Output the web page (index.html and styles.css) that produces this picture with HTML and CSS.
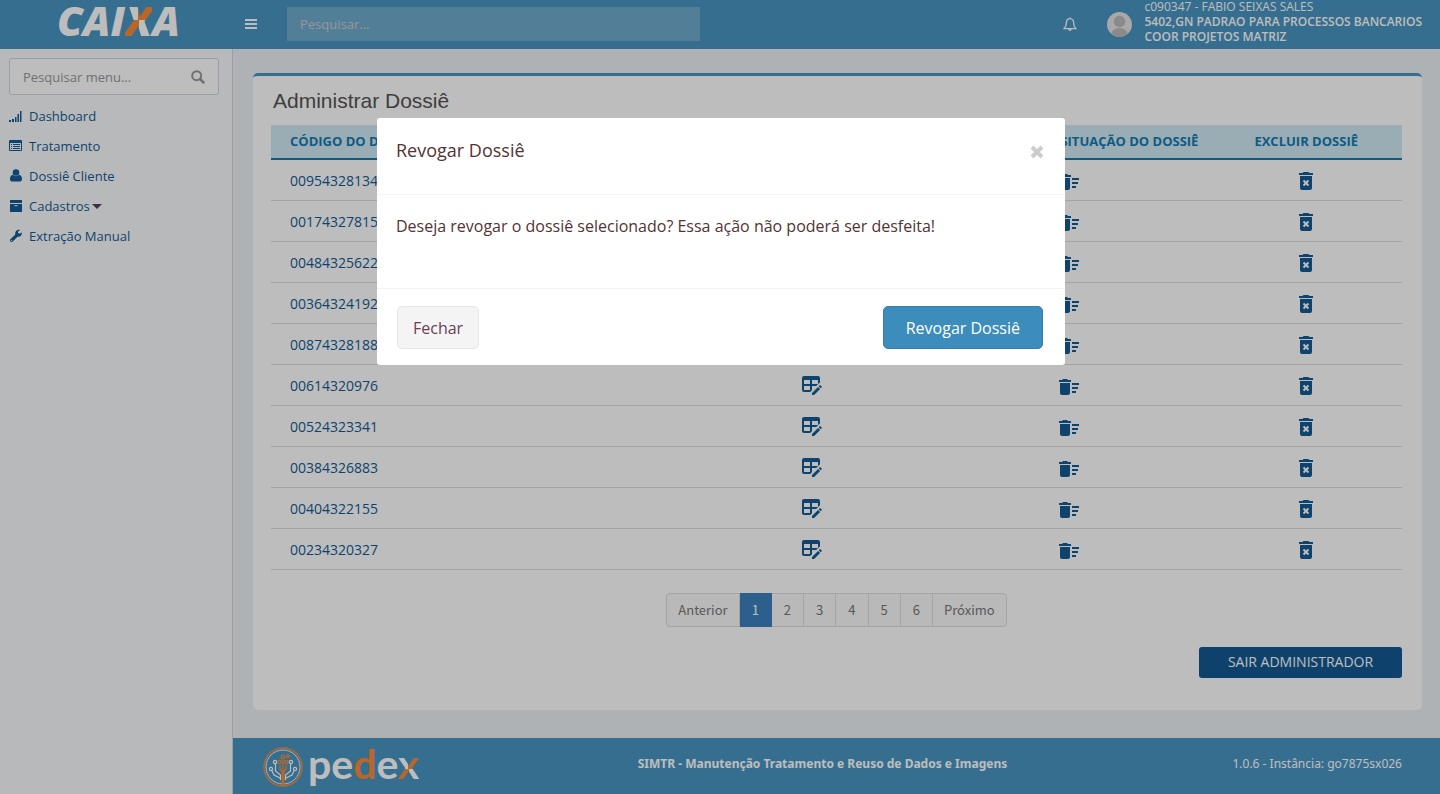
FILE: index.html
```html
<!DOCTYPE html>
<html lang="pt-BR">
<head>
<meta charset="utf-8">
<title>Administrar Dossiê</title>
<link rel="stylesheet" href="styles.css">
</head>
<body>
<svg class="sprite" aria-hidden="true">
  <symbol id="i-edit" viewBox="0 0 24 24"><path d="M21.7 13.35l-1 1-2.05-2.05 1-1c.21-.21.56-.21.77 0l1.28 1.28c.21.21.21.56 0 .77M12 18.94l6.07-6.06 2.05 2.05L14.06 21H12v-2.06M4 2h14a2 2 0 0 1 2 2v4.17L16.17 12H12v4.17L10.17 18H4a2 2 0 0 1-2-2V4a2 2 0 0 1 2-2m0 4v4h6V6H4m8 0v4h6V6h-6m-8 6v4h6v-4H4z"/></symbol>
  <symbol id="i-sweep" viewBox="0 0 24 24"><path d="M15 16h4v2h-4zm0-8h7v2h-7zm0 4h6v2h-6zM3 18c0 1.1.9 2 2 2h6c1.1 0 2-.9 2-2V8H3v10zM14 5h-3l-1-1H6L5 5H2v2h12z"/></symbol>
  <symbol id="i-trash" viewBox="0 0 24 24"><path fill-rule="evenodd" d="M15.5 4l-1-1h-5l-1 1H5v2h14V4zM6 7h12v12a2 2 0 0 1-2 2H8a2 2 0 0 1-2-2zM8.8 12.2l1.8 1.8-1.8 1.8 1.4 1.4 1.8-1.8 1.8 1.8 1.4-1.4-1.8-1.8 1.8-1.8-1.4-1.4-1.8 1.8-1.8-1.8z"/></symbol>
</svg>

<header class="topbar">
  <a class="brand" href="#" aria-label="CAIXA">CAI<span class="brand-x">X</span>A</a>
  <button class="toggle" type="button" aria-label="Alternar menu"><svg width="12" height="10" viewBox="0 0 12 10"><path d="M0 0h12v2H0zM0 4h12v2H0zM0 8h12v2H0z"/></svg></button>
  <input class="top-search" type="search" placeholder="Pesquisar..." aria-label="Pesquisar">
  <button class="bell" type="button" aria-label="Notificações"><svg width="14" height="15" viewBox="0 0 14 15"><path d="M7 1.6C4.4 1.6 3.4 3.6 3.4 5.6c0 3.3-.9 4.6-2.3 6h11.8c-1.4-1.4-2.3-2.7-2.3-6 0-2-1-4-3.6-4zM7 .4v1.2" fill="none" stroke="currentColor" stroke-width="1.3"/><path d="M5.2 12.2h3.6a1.8 1.8 0 0 1-3.6 0z"/></svg></button>
  <svg class="avatar" viewBox="0 0 25 25"><defs><clipPath id="av"><circle cx="12.500" cy="12.500" r="12.500"/></clipPath></defs><g clip-path="url(#av)"><path d="M0 0h25v25H0z" fill="#e3e3e3"/><circle cx="12.500" cy="9.500" r="5.800" fill="#bababa"/><ellipse cx="12.500" cy="23" rx="8.500" ry="7" fill="#bababa"/></g></svg>
  <div class="user"><span>c090347 - FABIO SEIXAS SALES</span><span class="unit">5402,GN PADRAO PARA PROCESSOS BANCARIOS</span><span class="unit">COOR PROJETOS MATRIZ</span></div>
</header>

<div class="shell">
  <aside class="sidebar">
    <form class="menu-search">
      <input type="text" placeholder="Pesquisar menu..." aria-label="Pesquisar menu">
      <button type="button" aria-label="Buscar"><svg width="14" height="14" viewBox="0 0 14 14"><circle cx="5.700" cy="5.700" r="4.500" fill="none" stroke="currentColor" stroke-width="2"/><path d="M9 9l3.500 3.500" stroke="currentColor" stroke-width="2.500" stroke-linecap="round"/></svg></button>
    </form>
    <nav class="menu">
      <a href="#"><svg viewBox="0 0 14 14"><path d="M0 11h2v2H0zM3 10h2v3H3zM6 8h1.500v5H6zM8.500 5h1.500v8H8.500zM11 2h1.500v11H11z"/></svg>Dashboard</a>
      <a href="#"><svg viewBox="0 0 14 14"><path fill-rule="evenodd" d="M1 1h11a1 1 0 0 1 1 1v9a1 1 0 0 1-1 1H1a1 1 0 0 1-1-1V2a1 1 0 0 1 1-1zm0 3v7h11V4zM2 5h1v1H2zm2 0h7v1H4zM2 7h1v1H2zm2 0h7v1H4zM2 9h1v1H2zm2 0h7v1H4z"/></svg>Tratamento</a>
      <a href="#"><svg viewBox="0 0 14 14"><circle cx="7" cy="3.500" r="3.300"/><path d="M3.800 5.700C2 6 1 7.800 1 10.300 1 11.600 1.800 12.500 3 12.500h8c1.200 0 2-.9 2-2.200 0-2.500-1-4.300-2.800-4.600a4.300 4.300 0 0 1-6.400 0z"/></svg>Dossiê Cliente</a>
      <a href="#"><svg viewBox="0 0 14 14"><path fill-rule="evenodd" d="M1 1h12v3H1zM1 5h12v8H1zM5.500 6.200v1h3v-1z"/></svg>Cadastros<span class="caret"></span></a>
      <a href="#"><svg viewBox="0 0 14 14"><path fill-rule="evenodd" d="M12.800 3.400L10.600 4.700 9 3.800V2.600L11.300 1C8.300-.2 5.600 2.400 6.300 5.400L1.400 10.200a1.600 1.600 0 0 0 2.300 2.300l4.900-4.800c2.600.6 4.900-1.600 4.200-4.300zM2.500 10.800a.6.6 0 1 1 0 1.200.6.600 0 0 1 0-1.200z"/></svg>Extração Manual</a>
    </nav>
  </aside>

  <div class="page">
    <main class="content">
      <section class="box">
        <h1>Administrar Dossiê</h1>
        <table>
          <colgroup><col class="c1"><col class="c2"><col class="c3"><col class="c4"></colgroup>
          <thead><tr><th class="code">CÓDIGO DO DOSSIÊ</th><th>EDITAR DOSSIÊ</th><th class="status">SITUAÇÃO DO DOSSIÊ</th><th class="last">EXCLUIR DOSSIÊ</th></tr></thead>
          <tbody id="rows"></tbody>
        </table>
        <nav class="pages" aria-label="Paginação">
          <a href="#" class="step">Anterior</a><a href="#" class="active" aria-current="page">1</a><a href="#">2</a><a href="#">3</a><a href="#">4</a><a href="#">5</a><a href="#">6</a><a href="#" class="step">Próximo</a>
        </nav>
        <div class="actions"><button class="exit" type="button">SAIR ADMINISTRADOR</button></div>
      </section>
    </main>
    <footer class="footer">
      <a class="pedex" href="#" aria-label="pedex">
        <svg class="tree" width="40" height="42" viewBox="0 0 40 42">
          <g stroke="#fff" stroke-width="1.200"><circle cx="20" cy="21" r="17" stroke-width=".9"/><path d="M17.500 34v-5l-5-4v-7M17 32l-6-3-2-4M22.500 34v-5l5-4v-7M23 32l6-3 2-4"/><circle cx="12" cy="16" r="1.600"/><circle cx="8" cy="23" r="1.600"/><circle cx="28" cy="16" r="1.600"/><circle cx="32" cy="23" r="1.600"/></g>
          <g stroke="#fa8a39" stroke-width="1.400"><circle cx="20" cy="21" r="19"/><path d="M20 27V14M17 19v4l3 4 3-4v-4"/><path d="M20 26v14" stroke-width="3"/><circle cx="20" cy="11" r="1.800"/><circle cx="16.500" cy="16" r="1.600"/><circle cx="23.500" cy="16" r="1.600"/><circle cx="25" cy="10" r="1.400"/></g>
        </svg>
        <span class="pedex-name">pe<span class="orange">d</span>e<span class="pedex-x">x</span></span>
      </a>
      <strong>SIMTR - Manutenção Tratamento e Reuso de Dados e Imagens</strong>
      <span class="version">1.0.6 - Instância: go7875sx026</span>
    </footer>
  </div>
</div>

<div class="backdrop">
  <div class="modal" role="dialog" aria-modal="true" aria-labelledby="modal-title">
    <div class="modal-head"><h2 id="modal-title">Revogar Dossiê</h2><button class="close" type="button" aria-label="Fechar janela"><svg width="14" height="14" viewBox="0 0 14 14"><path d="M2 2l10 10M12 2L2 12" stroke="currentColor" stroke-width="4"/></svg></button></div>
    <p class="modal-body">Deseja revogar o dossiê selecionado? Essa ação não poderá ser desfeita!</p>
    <div class="modal-foot"><button class="btn" type="button">Fechar</button><button class="btn primary" type="button">Revogar Dossiê</button></div>
  </div>
</div>
<script src="rows.js"></script>
</body>
</html>
```
FILE: styles.css
```css
* { box-sizing: border-box; }
body {
  margin: 0;
  min-height: 100vh;
  display: flex;
  flex-direction: column;
  background: #ecf0f5;
  color: #555;
  font: 13px/20px "Open Sans", "Noto Sans", sans-serif;
}
button, input { font: inherit; }
button { cursor: pointer; border: 0; background: none; padding: 0; color: inherit; }
a { color: inherit; text-decoration: none; }
svg { display: block; fill: currentColor; flex: none; }
.sprite { position: absolute; width: 0; height: 0; }

.topbar {
  display: flex;
  align-items: center;
  height: 49px;
  padding: 0 18px 1px 0;
  background: #4995c3;
  color: #fff;
}
.brand {
  width: 233px;
  padding: 0 0 8px 4px;
  text-align: center;
  font: italic 800 41px/42px "Open Sans", sans-serif;
}
.brand-x, .pedex-x {
  color: transparent;
  -webkit-background-clip: text;
  background-clip: text;
  background-image: conic-gradient(#fa8a39 25%, #fff 25% 50%, #fa8a39 50% 75%, #fff 75%);
}
.pedex-x { background-image: conic-gradient(at 50% 61%, #fa8a39 25%, #fff 25% 50%, #fa8a39 50% 75%, #fff 75%); }
.toggle { width: 36px; display: flex; justify-content: center; }
.top-search {
  width: 413px;
  height: 34px;
  margin-left: 18px;
  padding: 0 13px;
  border: 0;
  background: #6faccc;
  color: #fff;
}
.top-search::placeholder { color: #ccc; opacity: 1; }
.bell { margin-left: auto; }
.avatar { width: 25px; height: 25px; margin: 0 12px 0 30px; }
.user {
  display: flex;
  flex-direction: column;
  padding-bottom: 5px;
  font: 12px/15px "Open Sans", sans-serif;
}
.unit { font-weight: 600; }

.shell { flex: 1; display: flex; }
.sidebar {
  width: 233px;
  flex: none;
  padding: 9px 13px 0 9px;
  background: #f9fafc;
  border-right: 1px solid #d2d6de;
}
.menu-search {
  display: flex;
  align-items: center;
  height: 37px;
  padding: 0 13px;
  border: 1px solid #d2d6de;
  border-radius: 3px;
  background: #fff;
  color: #999;
}
.menu-search input { flex: 1; min-width: 0; padding: 0; border: 0; background: none; }
.menu-search input::placeholder { color: #999; opacity: 1; }
.menu { display: flex; flex-direction: column; padding-top: 6px; color: #135b95; }
.menu a { display: flex; align-items: center; gap: 6px; height: 30px; }
.menu svg { width: 14px; height: 14px; }
.caret { border: 5px solid transparent; border-top-color: #50405f; border-bottom: 0; margin-left: -4px; }

.page { flex: 1; min-width: 0; display: flex; flex-direction: column; }
.content { flex: 1; padding: 24px 18px 28px 20px; }
.box {
  padding: 13px 20px 32px 18px;
  border-top: 3px solid #4995c3;
  border-radius: 5px;
  background: #fff;
}
h1 { margin: 0 0 12px 2px; color: #555; font: 21px/24px "Liberation Sans", sans-serif; }
table { width: 100%; table-layout: fixed; border-collapse: collapse; color: #135b95; }
.c1 { width: 37%; }
.c2 { width: 22%; }
.c3 { width: 23%; }
.c4 { width: 18%; }
th {
  height: 34px;
  padding: 0 0 2px;
  border-bottom: 2px solid #147ab0;
  background: #d0eaf5;
  color: #147ab0;
  font-size: 13px;
  line-height: 20px;
}
td { height: 41px; padding: 2px 0 0; border-bottom: 1px solid #ddd; font-size: 14px; }
th.code, td.code { padding-left: 19px; text-align: left; }
th.status { text-align: right; }
th.last, td.last { padding-left: 12px; }
td.edit { padding-right: 4px; }
td.sweep { padding: 4px 0 0 2px; }
td button { display: block; margin: 0 auto; }
td svg { width: 24px; height: 24px; }

.pages {
  display: flex;
  width: max-content;
  margin: 23px auto 0;
  border: 1px solid #ddd;
  border-radius: 4px;
  background: #fafafa;
  color: #777;
  font: 13px/20px "Noto Sans CJK SC", sans-serif;
}
.pages a { padding: 6px 12px; border-right: 1px solid #ddd; }
.pages .step { padding: 6px 11px; }
.pages a:last-child { border-right: 0; }
.pages .active { margin: -1px 0; padding: 7px 12px; background: #3d80bd; border-color: #3d80bd; color: #fff; }
.actions { display: flex; justify-content: flex-end; margin-top: 20px; }
.exit { width: 203px; height: 31px; border-radius: 3px; background: #135992; color: #fff; font-size: 14px; }

.footer {
  display: grid;
  grid-template-columns: 1fr auto 1fr;
  align-items: center;
  height: 56px;
  padding: 0 38px 5px 30px;
  background: #4995c3;
  color: #fff;
  font: 12px/20px "Noto Sans", sans-serif;
}
.footer strong { padding-right: 20px; }
.version { text-align: right; }
.pedex { display: flex; align-items: center; gap: 5px; }
.tree { fill: none; margin-top: 7px; }
.pedex-name { font: 700 41px/42px Lato, sans-serif; }
.orange { color: #fa8a39; }

.backdrop {
  position: fixed;
  inset: 0;
  padding: 118px 19px 20px 21px;
  background: rgba(0, 0, 0, .26);
}
.modal {
  max-width: 688px;
  margin: 0 auto;
  border-radius: 3px;
  background: #fff;
  color: #533;
  font-size: 16px;
}
.modal-head {
  display: flex;
  justify-content: space-between;
  align-items: flex-start;
  height: 77px;
  padding: 20px 21px 0 19px;
  border-bottom: 1px solid #f4f4f4;
}
h2 { margin: 0; font-size: 18px; line-height: 24px; font-weight: 400; }
.close { margin-top: 7px; color: #ccc; }
.modal-body { margin: 0; padding: 19px 19px 50px; line-height: 24px; }
.modal-foot {
  display: flex;
  justify-content: space-between;
  padding: 17px 22px 16px 20px;
  border-top: 1px solid #f4f4f4;
}
.btn { height: 43px; padding: 0 15px; border: 1px solid #e7e7e7; border-radius: 5px; background: #f4f4f4; color: #6b4055; }
.primary { padding: 0 22px; border-color: #367fa9; background: #3c8dbc; color: #fff; }
```
FILE: rows.js
```javascript
const codes = ["00954328134", "00174327815", "00484325622", "00364324192", "00874328188", "00614320976", "00524323341", "00384326883", "00404322155", "00234320327"];
const action = (icon, label) => `<button type="button" aria-label="${label}"><svg><use href="#${icon}"/></svg></button>`;
document.getElementById("rows").innerHTML = codes.map(code =>
  `<tr><td class="code">${code}</td><td class="edit">${action("i-edit", "Editar " + code)}</td><td class="sweep">${action("i-sweep", "Revogar " + code)}</td><td class="last">${action("i-trash", "Excluir " + code)}</td></tr>`
).join("");
```
